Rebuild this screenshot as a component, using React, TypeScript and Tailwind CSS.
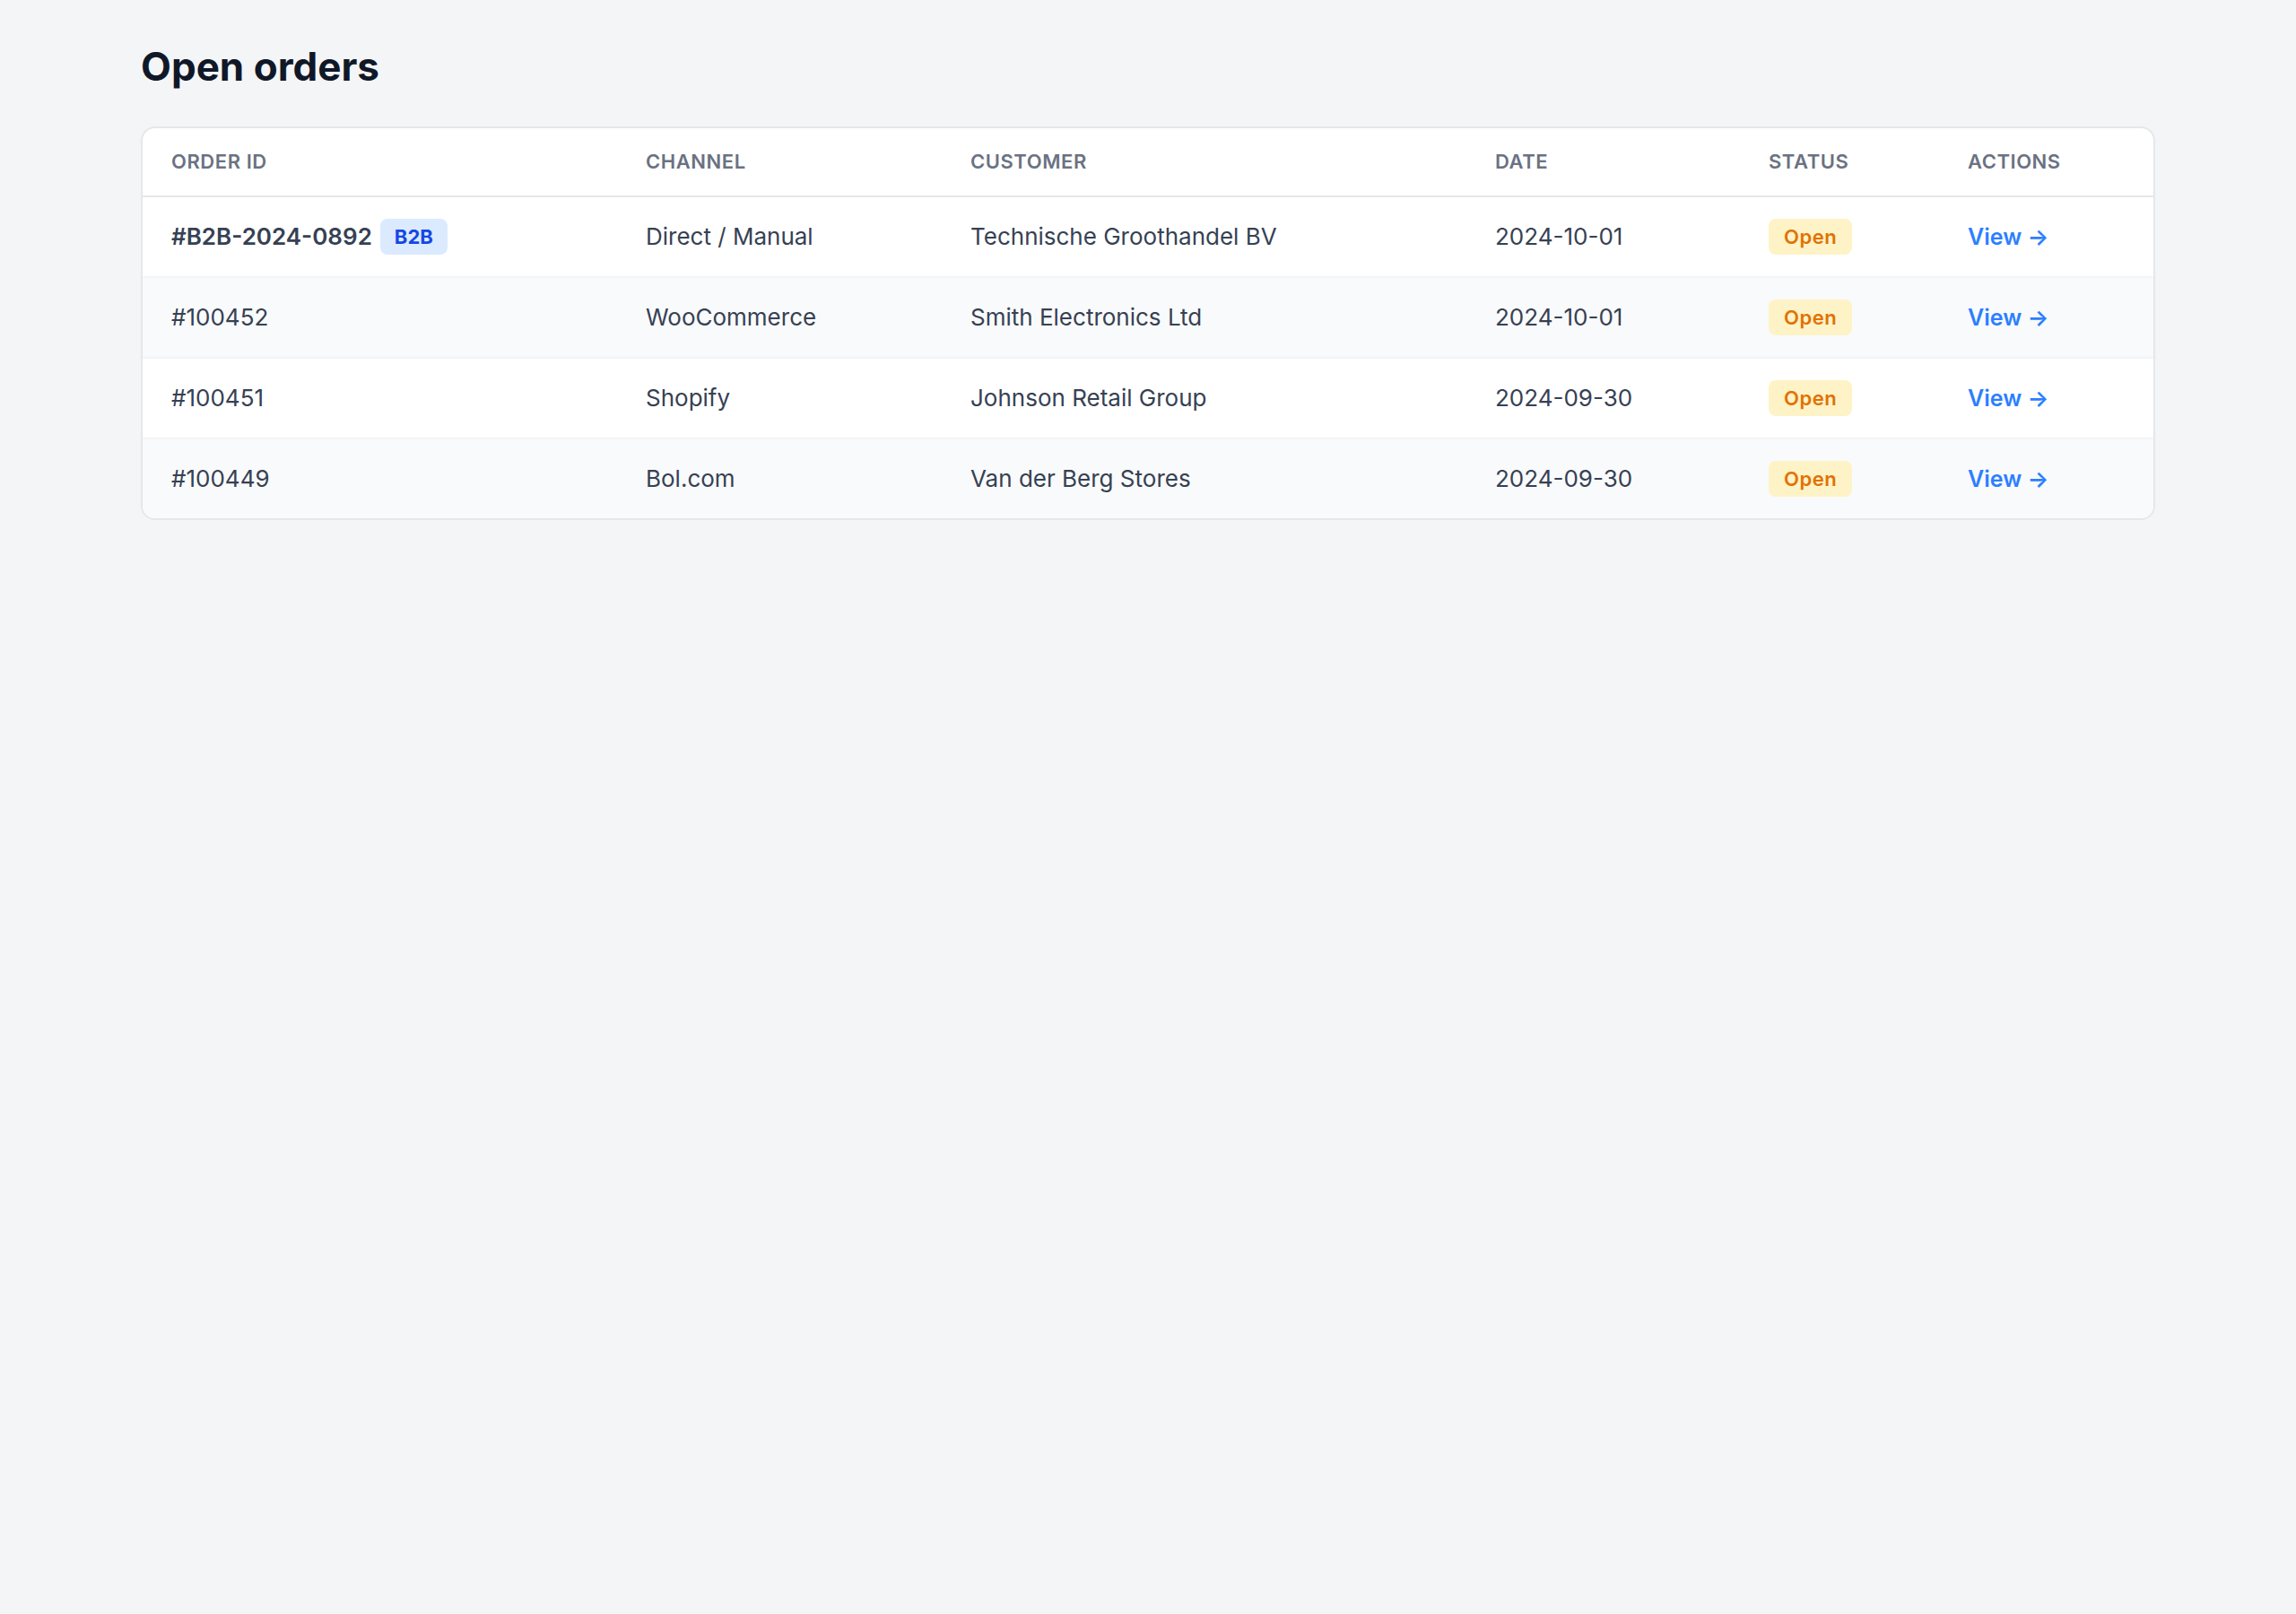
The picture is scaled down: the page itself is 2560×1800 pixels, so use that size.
const orders = [
  { id: '#B2B-2024-0892', b2b: true, channel: 'Direct / Manual', customer: 'Technische Groothandel BV', date: '2024-10-01' },
  { id: '#100452', b2b: false, channel: 'WooCommerce', customer: 'Smith Electronics Ltd', date: '2024-10-01' },
  { id: '#100451', b2b: false, channel: 'Shopify', customer: 'Johnson Retail Group', date: '2024-09-30' },
  { id: '#100449', b2b: false, channel: 'Bol.com', customer: 'Van der Berg Stores', date: '2024-09-30' },
]

const th = 'px-8 py-[21px] text-[22px] leading-[33px] font-semibold tracking-wide text-gray-500 uppercase'
const td = 'px-8 py-6 text-[26px] leading-10 text-gray-700'

export default function App() {
  return (
    <div className="min-h-screen bg-[#f4f5f7] px-[157px] pt-[42px] font-['Inter',sans-serif]">
      <h1 className="mb-[35px] text-[44px] leading-[64px] font-bold text-gray-900">Open orders</h1>
      <div className="overflow-hidden rounded-2xl border-2 border-gray-200 bg-white">
        <table className="w-full table-fixed text-left">
          <thead>
            <tr className="border-b-2 border-gray-200">
              <th className={`w-[529px] ${th}`}>Order ID</th>
              <th className={`w-[362px] ${th}`}>Channel</th>
              <th className={`w-[585px] ${th}`}>Customer</th>
              <th className={`w-[305px] ${th}`}>Date</th>
              <th className={`w-[222px] ${th}`}>Status</th>
              <th className={th}>Actions</th>
            </tr>
          </thead>
          <tbody>
            {orders.map((o, i) => (
              <tr
                key={o.id}
                className={`${i % 2 === 1 ? 'bg-gray-50' : 'bg-white'} ${i < orders.length - 1 ? 'border-b-2 border-gray-100' : ''}`}
              >
                <td className={td}>
                  {o.b2b ? (
                    <span className="flex items-center gap-[9px]">
                      <span className="font-semibold">{o.id}</span>
                      <span className="inline-block rounded-lg bg-blue-100 px-4 py-1 text-[22px] leading-8 font-bold text-blue-700">
                        B2B
                      </span>
                    </span>
                  ) : (
                    o.id
                  )}
                </td>
                <td className={td}>{o.channel}</td>
                <td className={td}>{o.customer}</td>
                <td className={td}>{o.date}</td>
                <td className="px-8 py-6">
                  <span className="inline-block rounded-lg bg-amber-100 px-[17px] py-1 text-[22px] leading-8 font-semibold tracking-wide text-amber-600">
                    Open
                  </span>
                </td>
                <td className="px-8 py-6 text-[25px] leading-10">
                  <a href="#" className="font-semibold text-blue-500">
                    View →
                  </a>
                </td>
              </tr>
            ))}
          </tbody>
        </table>
      </div>
    </div>
  )
}
